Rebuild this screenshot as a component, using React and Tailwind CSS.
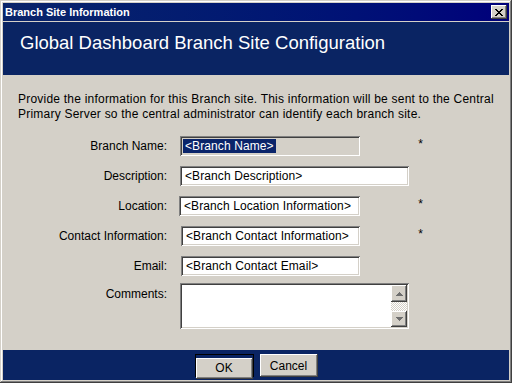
import React from 'react'

const raised =
  'shadow-[inset_-1px_-1px_0_#404040,inset_1px_1px_0_#ffffff,inset_-2px_-2px_0_#808080,inset_2px_2px_0_#d4d0c8]'
const sunken =
  'shadow-[inset_1px_1px_0_#808080,inset_-1px_-1px_0_#ffffff,inset_2px_2px_0_#404040,inset_-2px_-2px_0_#d4d0c8]'

function CloseGlyph() {
  return (
    <svg width="8" height="7" viewBox="0 0 8 7" shapeRendering="crispEdges">
      <path
        fill="#000"
        d="M0 0h2v1H0zM6 0h2v1H6zM1 1h2v1H1zM5 1h2v1H5zM2 2h4v1H2zM3 3h2v1H3zM2 4h4v1H2zM1 5h2v1H1zM5 5h2v1H5zM0 6h2v1H0zM6 6h2v1H6z"
      />
    </svg>
  )
}

function Arrow({ up }) {
  return (
    <svg width="7" height="4" viewBox="0 0 7 4" shapeRendering="crispEdges">
      <path
        fill="#6e6e6e"
        d={up ? 'M3 0h1v1H3zM2 1h3v1H2zM1 2h5v1H1zM0 3h7v1H0z' : 'M0 0h7v1H0zM1 1h5v1H1zM2 2h3v1H2zM3 3h1v1H3z'}
      />
    </svg>
  )
}

function Field({ value, width = 'w-[180px]', selected, offset = 'ml-[13px]' }) {
  return (
    <div className={`${offset} ${width} h-[20px] ${sunken} ${selected ? 'bg-[#d4d0c8]' : 'bg-white'} flex items-center pl-[3px] text-[12px] leading-[14px] tracking-[0.1px] text-black`}>
      {selected ? (
        <span className="bg-[#0a246a] text-white px-[2px]">{value}</span>
      ) : (
        <span className="pl-[2px]">{value}</span>
      )}
    </div>
  )
}

function Row({ label, children, required, className = '' }) {
  return (
    <div className={`flex items-center h-[20px] ${className}`}>
      <div className="w-[164px] text-right text-[12px]">{label}</div>
      {children}
      {required && <span className="ml-auto mr-[86px] text-[12px] -mt-[4px]">*</span>}
    </div>
  )
}

export default function App() {
  return (
    <div className="w-[512px] h-[383px] bg-[#d4d0c8] p-[3px] font-['Liberation_Sans',Arial,sans-serif] text-black shadow-[inset_-1px_-1px_0_#404040,inset_1px_1px_0_#d4d0c8,inset_-2px_-2px_0_#808080,inset_2px_2px_0_#ffffff]">
      <div className="h-full flex flex-col">
        {/* Title bar */}
        <div className="h-[18px] flex items-center justify-between bg-gradient-to-r from-[#0a246a] to-[#00007b] pl-[2px] pr-[2px]">
          <span className="text-white font-bold text-[11px] leading-none">Branch Site Information</span>
          <div className={`w-[16px] h-[14px] bg-[#d4d0c8] ${raised} flex items-center justify-center`}>
            <CloseGlyph />
          </div>
        </div>
        <div className="h-px bg-[#d4d0c8]" />

        {/* Header */}
        <div className="h-[53px] bg-[#0a2463] pl-[17px] pt-[10px]">
          <h1 className="text-white text-[18.5px] leading-[22px]">Global Dashboard Branch Site Configuration</h1>
        </div>

        {/* Body */}
        <div className="flex-1 pt-[17px]">
          <p className="pl-[15px] text-[12px] leading-[15px] tracking-[0.22px]">
            Provide the information for this Branch site. This information will be sent to the Central
            <br />
            Primary Server so the central administrator can identify each branch site.
          </p>

          <div className="mt-[14px] flex flex-col gap-[10px]">
            <Row label="Branch Name:" required>
              <Field value="<Branch Name>" selected />
            </Row>
            <Row label="Description:">
              <Field value="<Branch Description>" width="w-[229px]" />
            </Row>
            <Row label="Location:" required>
              <Field value="<Branch Location Information>" offset="ml-[12px]" width="w-[181px]" />
            </Row>
            <Row label="Contact Information:" required>
              <Field value="<Branch Contact Information>" offset="ml-[14px]" width="w-[179px]" />
            </Row>
            <Row label="Email:">
              <Field value="<Branch Contact Email>" offset="ml-[14px]" width="w-[179px]" />
            </Row>
          </div>

          <div className="mt-[7px] flex items-start">
            <div className="w-[164px] text-right text-[12px] pt-[2px]">Comments:</div>
            <div className={`ml-[13px] w-[229px] h-[46px] bg-white ${sunken} p-[2px] flex justify-end`}>
              <div className="w-[16px] flex flex-col">
                <div className={`h-[17px] bg-[#d4d0c8] ${raised} flex items-center justify-center`}>
                  <Arrow up />
                </div>
                <div className="flex-1 bg-[repeating-conic-gradient(#d4d0c8_0_25%,#ffffff_0_50%)] bg-[length:2px_2px]" />
                <div className={`h-[16px] bg-[#d4d0c8] ${raised} flex items-center justify-center`}>
                  <Arrow />
                </div>
              </div>
            </div>
          </div>
        </div>

        {/* Footer */}
        <div className="h-[30px] bg-[#0a2463] flex justify-center gap-[6px] pt-[4px]">
          <div className="w-[59px] h-[23px] border border-black">
            <button className={`w-full h-full bg-[#d4d0c8] ${raised} text-[12px] leading-none`}>OK</button>
          </div>
          <button className={`w-[58px] h-[23px] bg-[#d4d0c8] ${raised} text-[12px] leading-none`}>Cancel</button>
        </div>
      </div>
    </div>
  )
}
